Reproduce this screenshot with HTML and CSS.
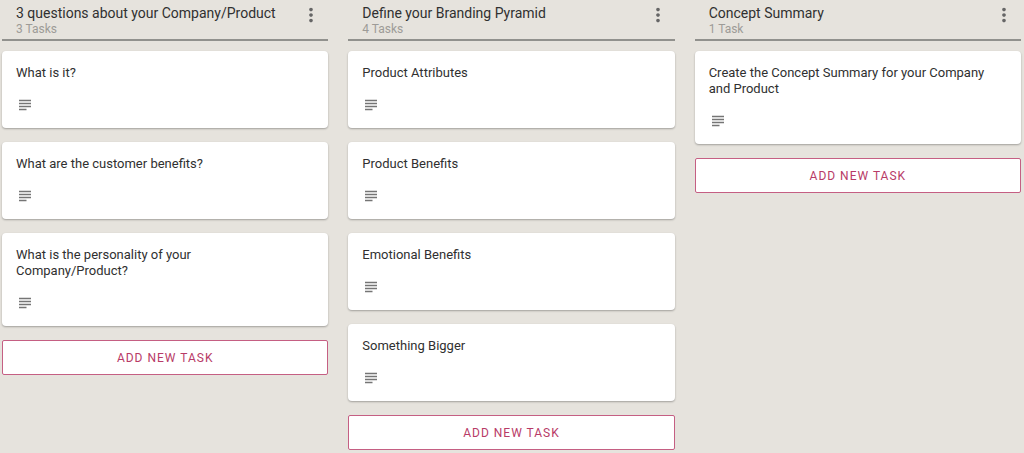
FILE: index.html
```html
<!DOCTYPE html>
<html lang="en">
<head>
    <meta charset="UTF-8">
    <meta name="viewport" content="width=device-width, initial-scale=1.0">
    <title>Task board</title>
    <link rel="stylesheet" href="styles.css">
</head>
<body>
    <svg width="0" height="0" class="sprite" aria-hidden="true">
        <symbol id="icon-more" viewBox="0 0 24 24">
            <path d="M12 8c1.1 0 2-.9 2-2s-.9-2-2-2-2 .9-2 2 .9 2 2 2zm0 2c-1.1 0-2 .9-2 2s.9 2 2 2 2-.9 2-2-.9-2-2-2zm0 6c-1.1 0-2 .9-2 2s.9 2 2 2 2-.9 2-2-.9-2-2-2z"/>
        </symbol>
        <symbol id="icon-subject" viewBox="0 0 24 24">
            <path d="M14 17H4v2h10v-2zm6-8H4v2h16V9zM4 15h16v-2H4v2zM4 5v2h16V5H4z"/>
        </symbol>
    </svg>

    <main class="board">
        <section class="column">
            <header class="column-header">
                <div>
                    <h2 class="column-title">3 questions about your Company/Product</h2>
                    <p class="column-count">3 Tasks</p>
                </div>
                <button class="menu-button" type="button" aria-label="Column menu"><svg class="icon"><use href="#icon-more"/></svg></button>
            </header>
            <article class="card">
                <h3 class="card-title">What is it?</h3>
                <svg class="icon"><use href="#icon-subject"/></svg>
            </article>
            <article class="card">
                <h3 class="card-title">What are the customer benefits?</h3>
                <svg class="icon"><use href="#icon-subject"/></svg>
            </article>
            <article class="card">
                <h3 class="card-title">What is the personality of your Company/Product?</h3>
                <svg class="icon"><use href="#icon-subject"/></svg>
            </article>
            <button class="add-button" type="button">Add new task</button>
        </section>

        <section class="column">
            <header class="column-header">
                <div>
                    <h2 class="column-title">Define your Branding Pyramid</h2>
                    <p class="column-count">4 Tasks</p>
                </div>
                <button class="menu-button" type="button" aria-label="Column menu"><svg class="icon"><use href="#icon-more"/></svg></button>
            </header>
            <article class="card">
                <h3 class="card-title">Product Attributes</h3>
                <svg class="icon"><use href="#icon-subject"/></svg>
            </article>
            <article class="card">
                <h3 class="card-title">Product Benefits</h3>
                <svg class="icon"><use href="#icon-subject"/></svg>
            </article>
            <article class="card">
                <h3 class="card-title">Emotional Benefits</h3>
                <svg class="icon"><use href="#icon-subject"/></svg>
            </article>
            <article class="card">
                <h3 class="card-title">Something Bigger</h3>
                <svg class="icon"><use href="#icon-subject"/></svg>
            </article>
            <button class="add-button" type="button">Add new task</button>
        </section>

        <section class="column">
            <header class="column-header">
                <div>
                    <h2 class="column-title">Concept Summary</h2>
                    <p class="column-count">1 Task</p>
                </div>
                <button class="menu-button" type="button" aria-label="Column menu"><svg class="icon"><use href="#icon-more"/></svg></button>
            </header>
            <article class="card">
                <h3 class="card-title">Create the Concept Summary for your Company and Product</h3>
                <svg class="icon"><use href="#icon-subject"/></svg>
            </article>
            <button class="add-button" type="button">Add new task</button>
        </section>
    </main>
</body>
</html>
```

FILE: styles.css
```css
* {
    box-sizing: border-box;
}
body {
    margin: 0;
    background: #e6e3dd;
    color: #303030;
    font-family: Roboto, sans-serif;
    font-size: 13px;
}
.sprite {
    position: absolute;
}
.board {
    display: grid;
    grid-template-columns: repeat(3, 1fr);
    gap: 20px;
    padding: 0 3px 0 2px;
}
.column {
    display: flex;
    flex-direction: column;
    gap: 14px;
}
.column-header {
    display: flex;
    justify-content: space-between;
    align-items: flex-start;
    height: 41px;
    margin-bottom: -4px;
    padding: 4px 6px 0 14px;
    border-bottom: 2px solid #91918d;
}
.column-title {
    margin: 0;
    font-size: 14px;
    line-height: 18px;
    font-weight: 400;
}
.column-count {
    margin: 0;
    color: #9d9b97;
    font-size: 12px;
    line-height: 14px;
}
.menu-button {
    display: flex;
    padding: 0;
    border: 0;
    background: none;
    cursor: pointer;
}
.icon {
    display: block;
    width: 18px;
    height: 18px;
    fill: #757575;
}
.menu-button .icon {
    width: 22px;
    height: 22px;
    fill: #666;
}
.card {
    padding: 14px 24px 14px 14px;
    border-radius: 4px;
    background: #fff;
    box-shadow: 0 1px 2px rgba(0, 0, 0, 0.3);
}
.card-title {
    margin: 0 0 15px;
    font-size: 13px;
    line-height: 16px;
    font-weight: 400;
}
.add-button {
    height: 35px;
    border: 1px solid #c55f83;
    border-radius: 2px;
    background: #fff;
    color: #b83b67;
    font-family: inherit;
    font-size: 12px;
    letter-spacing: 1px;
    text-transform: uppercase;
    cursor: pointer;
}
```
